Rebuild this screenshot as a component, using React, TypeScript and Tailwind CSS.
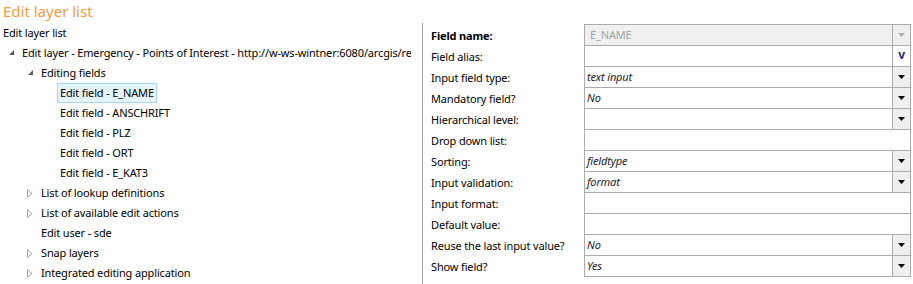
import React from "react";

type Node = {
  depth: number;
  label: string;
  state?: "open" | "closed";
  selected?: boolean;
};

const tree: Node[] = [
  {
    depth: 0,
    label: "Edit layer - Emergency - Points of Interest - http://w-ws-wintner:6080/arcgis/rest",
    state: "open",
  },
  { depth: 1, label: "Editing fields", state: "open" },
  { depth: 2, label: "Edit field - E_NAME", selected: true },
  { depth: 2, label: "Edit field - ANSCHRIFT" },
  { depth: 2, label: "Edit field - PLZ" },
  { depth: 2, label: "Edit field - ORT" },
  { depth: 2, label: "Edit field - E_KAT3" },
  { depth: 1, label: "List of lookup definitions", state: "closed" },
  { depth: 1, label: "List of available edit actions", state: "closed" },
  { depth: 1, label: "Edit user - sde" },
  { depth: 1, label: "Snap layers", state: "closed" },
  { depth: 1, label: "Integrated editing application", state: "closed" },
];

type Field = {
  label: string;
  value?: string;
  kind: "disabled" | "alias" | "select" | "text";
  bold?: boolean;
};

const fields: Field[] = [
  { label: "Field name:", value: "E_NAME", kind: "disabled", bold: true },
  { label: "Field alias:", kind: "alias" },
  { label: "Input field type:", value: "text input", kind: "select" },
  { label: "Mandatory field?", value: "No", kind: "select" },
  { label: "Hierarchical level:", value: "", kind: "select" },
  { label: "Drop down list:", kind: "text" },
  { label: "Sorting:", value: "fieldtype", kind: "select" },
  { label: "Input validation:", value: "format", kind: "select" },
  { label: "Input format:", kind: "text" },
  { label: "Default value:", kind: "text" },
  { label: "Reuse the last input value?", value: "No", kind: "select" },
  { label: "Show field?", value: "Yes", kind: "select" },
];

const indent = ["ml-[3px]", "ml-[22px]", "ml-[41px]"];

function Expander({ state }: { state?: "open" | "closed" }) {
  return (
    <span className="w-[16px] h-[20px] shrink-0 flex items-center">
      {state === "open" && (
        <svg width="6" height="6" viewBox="0 0 6 6" className="ml-[6px]">
          <polygon points="5,0 5,5 0,5" fill="#595959" />
        </svg>
      )}
      {state === "closed" && (
        <svg width="6" height="9" viewBox="0 0 6 9" className="ml-[5px]">
          <polygon points="0.5,0.5 5,4.5 0.5,8.5" fill="none" stroke="#a6a6a6" strokeWidth="1" />
        </svg>
      )}
    </span>
  );
}

function Arrow({ color }: { color: string }) {
  return (
    <svg width="7" height="4" viewBox="0 0 7 4">
      <polygon points="0,0 7,0 3.5,4" fill={color} />
    </svg>
  );
}

function FieldBox({ field }: { field: Field }) {
  const disabled = field.kind === "disabled";
  return (
    <div
      className={`flex-1 h-[22px] flex border border-[#ababab] ${disabled ? "bg-[#f0f0f0]" : "bg-white"}`}
    >
      <div
        className={`flex-1 leading-[20px] truncate ${
          disabled ? "pl-[5px] text-[#a0a0a0]" : "pl-[2px] italic text-[#1b1b2b]"
        }`}
      >
        {field.value}
      </div>
      {field.kind === "alias" && (
        <div className="w-[18px] border-l border-[#ababab] flex items-center justify-center font-bold text-[12px] text-[#1f2a6b] leading-none pb-[2px]">
          v
        </div>
      )}
      {(field.kind === "select" || disabled) && (
        <div className="w-[18px] border-l border-[#ababab] bg-[#efefef] flex items-center justify-center">
          <Arrow color={disabled ? "#b0b0b0" : "#000000"} />
        </div>
      )}
    </div>
  );
}

export default function App() {
  return (
    <div className="w-[913px] h-[284px] overflow-hidden bg-white text-black text-[11px] tracking-[-0.15px] font-['Segoe_UI','Noto_Sans',sans-serif]">
      <div className="h-[23px] pl-[3px] text-[15px] leading-[22px] tracking-normal text-[#f29b3f]">Edit layer list</div>
      <div className="flex">
        <div className="w-[422px] shrink-0">
          <div className="h-[20px] leading-[20px] pl-[3px]">Edit layer list</div>
          <div className="w-[411px] overflow-hidden">
            {tree.map((n) => (
              <div key={n.label} className={`flex h-[20px] items-center whitespace-nowrap ${indent[n.depth]}`}>
                <Expander state={n.state} />
                <span
                  className={`h-[20px] leading-[18px] px-[2px] border ${
                    n.selected ? "bg-[#e5f3fb] border-[#a8d8f0]" : "border-transparent"
                  }`}
                >
                  {n.label}
                </span>
              </div>
            ))}
          </div>
        </div>
        <div className="border-l border-[#a0a0a0] pl-[8px] pt-[1px] h-[261px]">
          {fields.map((f) => (
            <div key={f.label} className="flex h-[22px] -mt-px first:mt-0 w-[480px]">
              <div className={`w-[153px] shrink-0 h-[22px] pt-[2px] leading-[20px] whitespace-nowrap ${f.bold ? "font-bold" : ""}`}>
                {f.label}
              </div>
              <FieldBox field={f} />
            </div>
          ))}
        </div>
      </div>
    </div>
  );
}
